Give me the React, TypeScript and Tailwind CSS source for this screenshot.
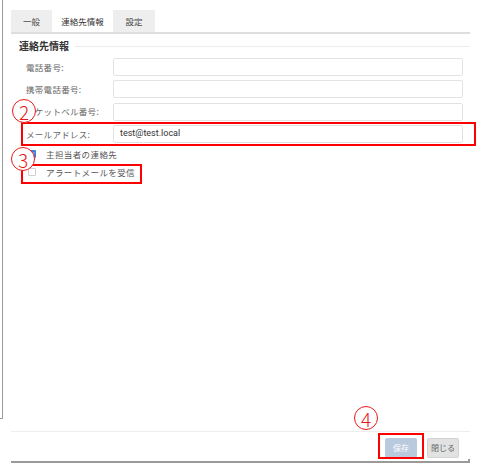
const FIELDS = ["電話番号:", "携帯電話番号:", "ポケットベル番号:", "メールアドレス:"];

function Circled({ n, pos }: { n: string; pos: string }) {
  return (
    <div
      className={
        "absolute flex items-center justify-center w-[24px] h-[24px] rounded-full border border-[#e81818] bg-white text-[19px] leading-none font-light text-[#e81818] font-['Noto_Sans_CJK_JP',sans-serif] " +
        pos
      }
    >
      {n}
    </div>
  );
}

export default function App() {
  return (
    <div className="relative flex w-[481px] h-[466px] bg-white font-['Noto_Sans_CJK_JP',sans-serif] overflow-hidden">
      {/* underlying page edge */}
      <div className="w-[11px] shrink-0">
        <div className="w-[3px] h-[419px] border-r border-b border-[#9a9a9a]" />
      </div>

      {/* dialog */}
      <div className="w-[459px] flex flex-col pt-[10px] pb-[3px]">
        <div className="flex h-[24px] border-b-2 border-[#dedede]">
          <div className="w-[41px] flex items-center justify-center bg-[#eeeeee] text-[8.5px] text-[#444]">一般</div>
          <div className="w-[59px] ml-[1px] flex items-center justify-center bg-white text-[8.5px] text-[#333]">連絡先情報</div>
          <div className="w-[42px] ml-[1px] flex items-center justify-center bg-[#eeeeee] text-[8.5px] text-[#444]">設定</div>
        </div>

        <div className="flex items-center h-[14px] mt-[5px] pl-[8px]">
          <span className="text-[10px] font-bold text-[#333] leading-none">連絡先情報</span>
          <div className="flex-1 h-[1px] bg-[#ececec] ml-[6px]" />
        </div>

        <div className="mt-[5px] flex flex-col gap-[4.4px]">
          {FIELDS.map((label, i) => (
            <div key={label} className="flex items-center h-[18px]">
              <div className="w-[102px] pl-[15px] text-[8.5px] text-[#666] tracking-[0.3px]">{label}</div>
              <div className="w-[350px] h-full flex items-center px-[6px] border border-[#e3e3e3] rounded-[2px] text-[9px] text-[#333] font-['Roboto',sans-serif]">
                {i === 3 ? "test@test.local" : ""}
              </div>
            </div>
          ))}
        </div>

        <div className="mt-[3px] flex flex-col gap-[2px] pl-[17px]">
          <div className="flex items-center h-[16px]">
            <div className="w-[8px] h-[8px] rounded-[1px] bg-[#3d7fdc] flex items-center justify-center">
              <svg width="6" height="6" viewBox="0 0 6 6">
                <path d="M1 3 L2.5 4.5 L5 1.5" stroke="white" strokeWidth="1" fill="none" />
              </svg>
            </div>
            <span className="ml-[10px] text-[8.5px] text-[#555] tracking-[0.4px]">主担当者の連絡先</span>
          </div>
          <div className="flex items-center h-[16px]">
            <div className="w-[8px] h-[8px] rounded-[1px] border border-[#cfcfcf] bg-white" />
            <span className="ml-[10px] text-[8.5px] text-[#555] tracking-[0.4px]">アラートメールを受信</span>
          </div>
        </div>

        <div className="flex-1" />

        <div className="h-[28px] border-t border-[#eeeeee] flex justify-end items-start pt-[6px] pr-[11px] gap-[10px]">
          <button className="w-[32px] h-[20px] rounded-[2px] bg-[#b9c9de] text-[8px] text-white">保存</button>
          <button className="w-[32px] h-[20px] rounded-[2px] bg-[#e2e2e2] border border-[#d2d2d2] text-[8px] text-[#666]">閉じる</button>
        </div>
        <div className="h-[4px] border-b-2 border-r-2 border-[#9a9a9a]" />
      </div>

      {/* annotations */}
      <div className="absolute left-[21px] top-[122px] w-[455px] h-[24px] border-2 border-[#ff0000]" />
      <div className="absolute left-[21px] top-[164px] w-[121px] h-[20px] border-2 border-[#ff0000]" />
      <div className="absolute left-[378px] top-[433px] w-[46px] h-[26px] border-2 border-[#ff0000]" />
      <Circled n="2" pos="left-[12px] top-[99px]" />
      <Circled n="3" pos="left-[11px] top-[147px]" />
      <Circled n="4" pos="left-[354px] top-[406px]" />
    </div>
  );
}
